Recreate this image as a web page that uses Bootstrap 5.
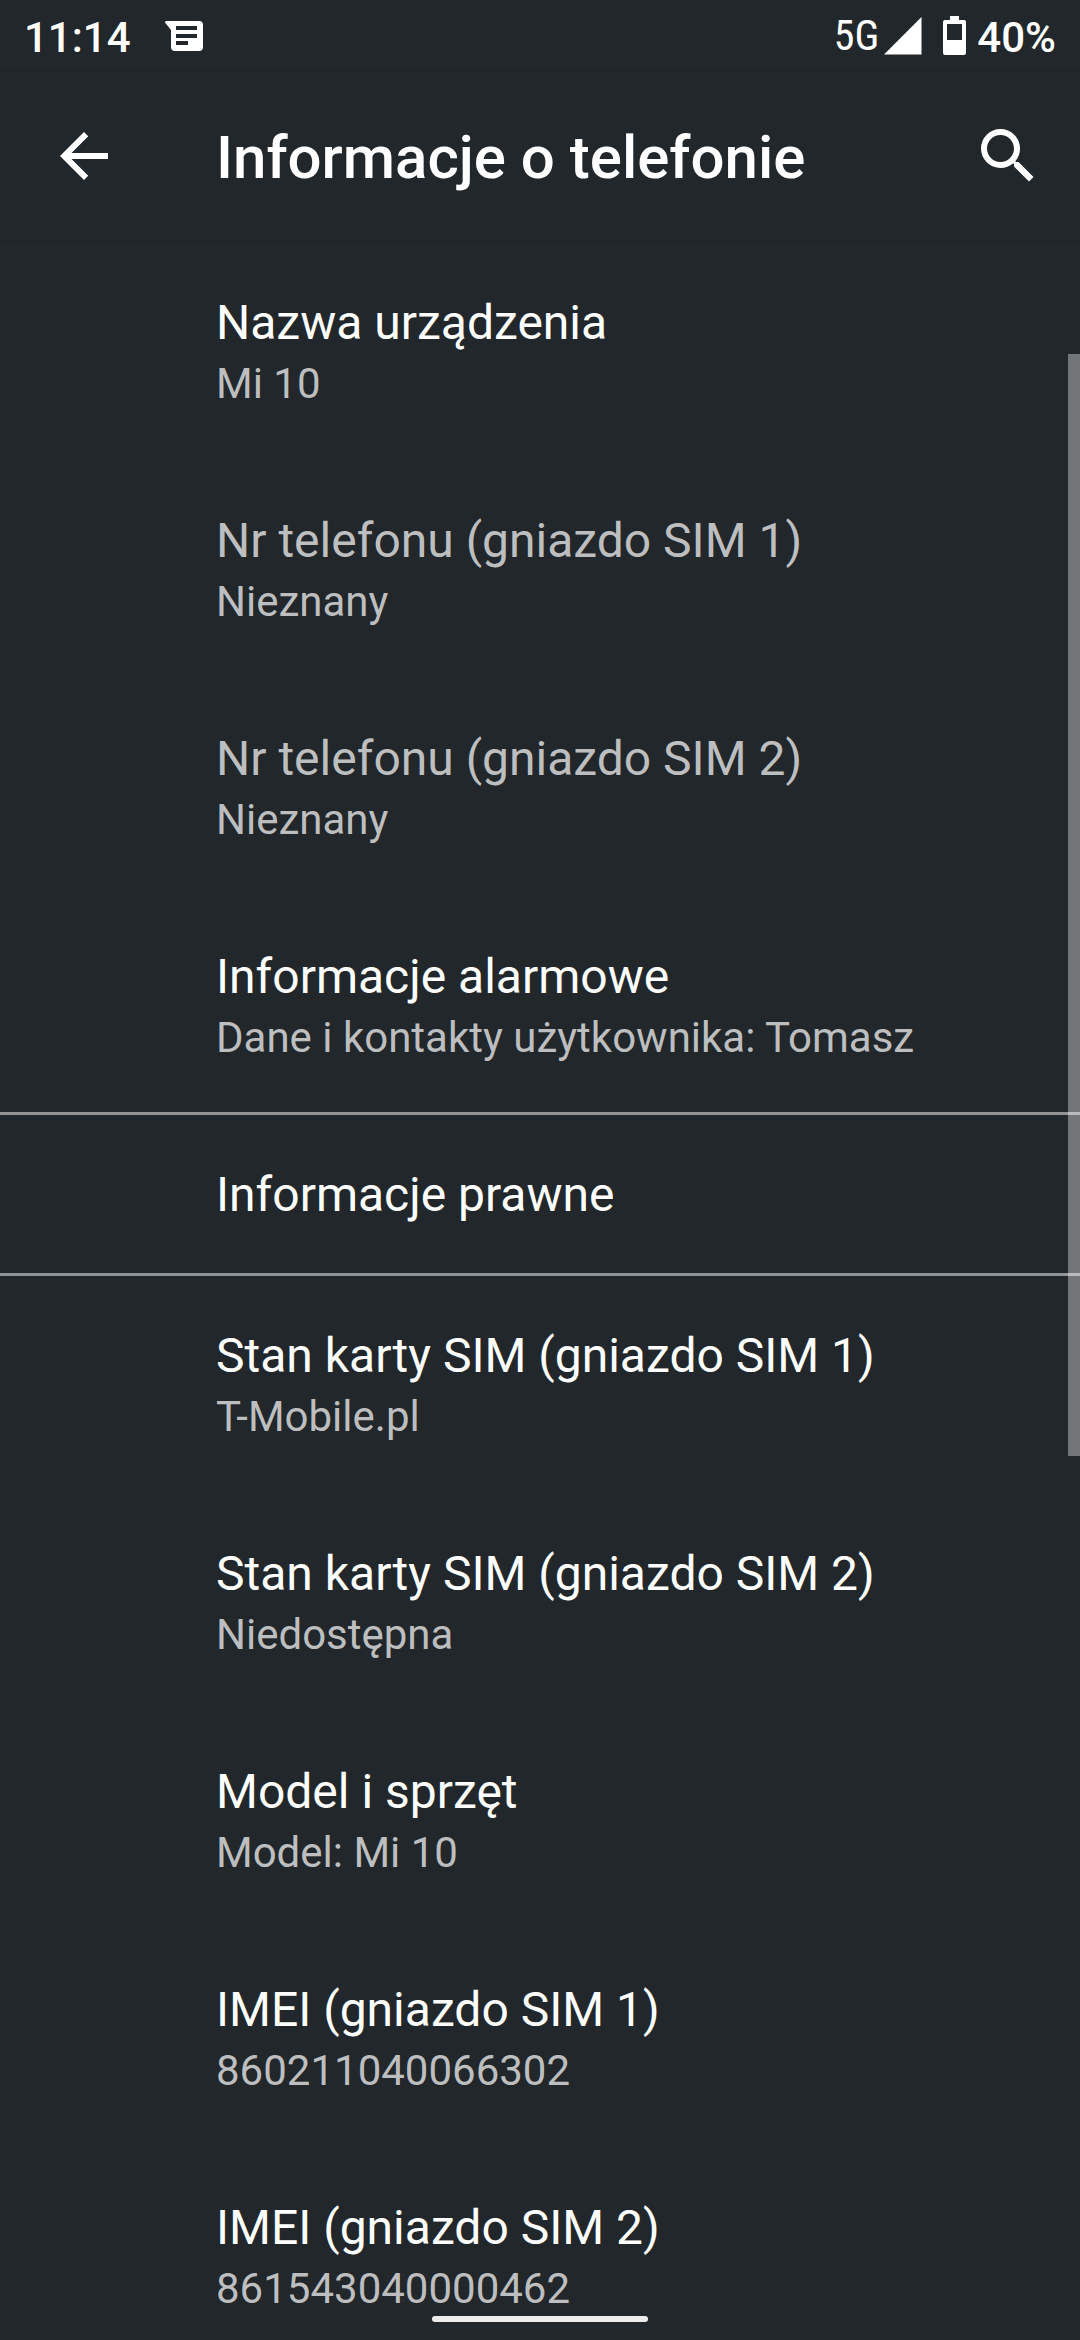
<!DOCTYPE html>
<html lang="pl" data-bs-theme="dark">
<head>
<meta charset="utf-8">
<meta name="viewport" content="width=device-width, initial-scale=1">
<title>Informacje o telefonie</title>
<link rel="stylesheet" href="https://cdn.jsdelivr.net/npm/bootstrap@5.3.0/dist/css/bootstrap.min.css">
<style>
  body { background: #22272b; color: #fff; font-family: Roboto, "Noto Sans", sans-serif; }
  .status-bar { height: 72px; padding: 0 24px; font-size: 42px; font-weight: 500; line-height: 72px; }
  .status-bar span { padding-top: 3px; }
  .status-bar .net-type { font-family: "Roboto Condensed", "Liberation Sans Narrow", Roboto, sans-serif; font-size: 42px; font-weight: 400; padding-top: 0; }
  .battery { margin-left: 18px; }
  .app-bar { height: 168px; padding: 0 36px; box-shadow: 0 1px 4px rgba(0, 0, 0, .12); }
  .app-bar h1 { font-size: 60px; font-weight: 500; line-height: 72px; margin-left: 84px; padding-top: 4px; }
  .icon-btn { width: 96px; height: 96px; padding: 12px; border: 0; }
  .search-btn { width: 72px; padding: 12px 0; }
  .pref { display: block; padding: 51px 48px 46px 216px; color: #fff; text-decoration: none; }
  .pref-title { font-size: 48px; line-height: 64px; }
  .pref-note { font-size: 42px; line-height: 57px; color: #bdbebf; }
  .pref-off .pref-title { color: #bdbebf; }
  .pref-ruled { border-top: 3px solid #919395; padding-top: 48px; }
  .scroll-thumb { width: 12px; top: 114px; height: 1102px; background: rgba(255, 255, 255, .37); }
  .home-pill { width: 216px; height: 6px; bottom: 18px; background: #ececec; }
</style>
<script src="https://cdn.jsdelivr.net/npm/bootstrap@5.3.0/dist/js/bootstrap.bundle.min.js"></script>
</head>
<body>
<div class="vh-100 d-flex flex-column overflow-hidden position-relative">
  <div class="status-bar d-flex justify-content-between align-items-center flex-shrink-0">
    <div class="d-flex align-items-center">
      <span>11:14</span>
      <svg class="ms-4" width="50" height="44" viewBox="0 0 50 44" fill="#fff" aria-hidden="true"><path fill-rule="evenodd" d="M11 7h33a4 4 0 0 1 4 4v22a4 4 0 0 1-4 4H20a4 4 0 0 1-4-4V16L10 8.500Q10 7 11 7zM21 12v4h21v-4zM21 20v4h21v-4zM21 27v4h12v-4z"/></svg>
    </div>
    <div class="d-flex align-items-center">
      <span class="net-type">5G</span>
      <svg class="ms-1" width="40" height="40" viewBox="0 0 40 40" fill="#fff" aria-hidden="true"><path d="M1 38.500 38.500 1v37.500z"/></svg>
      <svg class="battery" width="28" height="40" viewBox="0 0 28 40" fill="#fff" aria-hidden="true"><path fill-rule="evenodd" d="M9 0h9v4h5q2 0 2 2v31q0 2-2 2H4q-2 0-2-2V6q0-2 2-2h5zM6 8v16h15V8z"/></svg>
      <span class="ms-2">40%</span>
    </div>
  </div>
  <header class="app-bar d-flex align-items-center flex-shrink-0">
    <button type="button" class="btn icon-btn" aria-label="Wstecz"><svg class="d-block" width="72" height="72" viewBox="0 0 24 24" fill="#fff"><path d="M20 11H7.830l5.590-5.590L12 4l-8 8 8 8 1.410-1.410L7.830 13H20z"/></svg></button>
    <h1 class="mb-0 flex-fill">Informacje o telefonie</h1>
    <button type="button" class="btn icon-btn search-btn" aria-label="Szukaj"><svg class="d-block" width="72" height="72" viewBox="0 0 24 24" fill="#fff"><path d="M15.500 14h-.790l-.280-.270A6.471 6.471 0 0 0 16 9.500 6.500 6.500 0 1 0 9.500 16c1.610 0 3.090-.590 4.230-1.570l.270.280v.790l5 4.990L20.490 19zM9.500 14C7.010 14 5 11.990 5 9.500S7.010 5 9.500 5 14 7.010 14 9.500 11.990 14 9.500 14z"/></svg></button>
  </header>
  <main class="flex-fill overflow-hidden position-relative">
    <a class="pref" href="#"><div class="pref-title">Nazwa urządzenia</div><div class="pref-note">Mi 10</div></a>
    <div class="pref pref-off"><div class="pref-title">Nr telefonu (gniazdo SIM 1)</div><div class="pref-note">Nieznany</div></div>
    <div class="pref pref-off"><div class="pref-title">Nr telefonu (gniazdo SIM 2)</div><div class="pref-note">Nieznany</div></div>
    <a class="pref" href="#"><div class="pref-title">Informacje alarmowe</div><div class="pref-note">Dane i kontakty użytkownika: Tomasz</div></a>
    <a class="pref pref-ruled" href="#"><div class="pref-title">Informacje prawne</div></a>
    <a class="pref pref-ruled" href="#"><div class="pref-title">Stan karty SIM (gniazdo SIM 1)</div><div class="pref-note">T-Mobile.pl</div></a>
    <a class="pref" href="#"><div class="pref-title">Stan karty SIM (gniazdo SIM 2)</div><div class="pref-note">Niedostępna</div></a>
    <a class="pref" href="#"><div class="pref-title">Model i sprzęt</div><div class="pref-note">Model: Mi 10</div></a>
    <a class="pref" href="#"><div class="pref-title">IMEI (gniazdo SIM 1)</div><div class="pref-note">860211040066302</div></a>
    <a class="pref" href="#"><div class="pref-title">IMEI (gniazdo SIM 2)</div><div class="pref-note">861543040000462</div></a>
    <div class="scroll-thumb position-absolute end-0"></div>
  </main>
  <div class="home-pill position-absolute start-50 translate-middle-x rounded-pill"></div>
</div>
</body>
</html>
